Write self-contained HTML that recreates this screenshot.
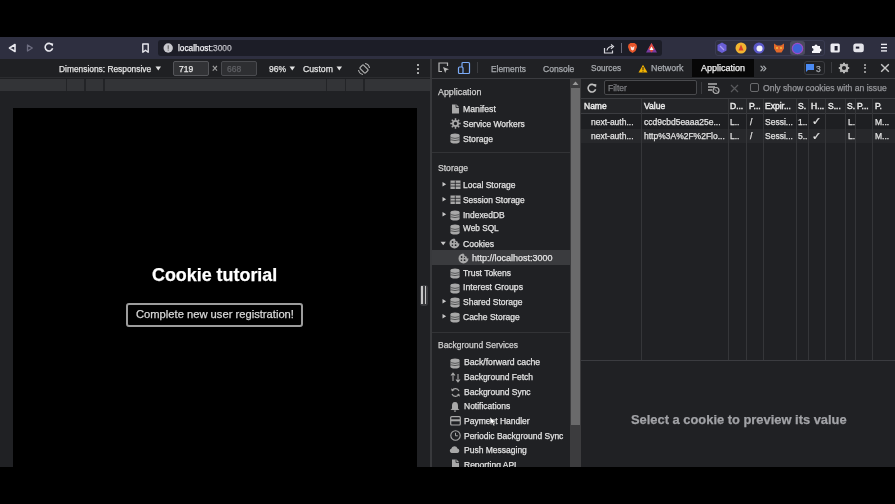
<!DOCTYPE html>
<html><head><meta charset="utf-8"><style>
html,body{margin:0;padding:0;}
body{width:895px;height:504px;overflow:hidden;position:relative;background:#000;font-family:"Liberation Sans", sans-serif;}
</style></head><body>
<div style="position:absolute;left:0px;top:37px;width:895px;height:21.5px;background:#2e2f40;"></div>
<svg style="position:absolute;left:5.5px;top:41.5px;" width="12" height="12" viewBox="0 0 12 12"><path d="M9 2.5 L3.5 6 L9 9.5 Z" fill="none" stroke="#e8e8ee" stroke-width="1.6" stroke-linejoin="round"/></svg>
<svg style="position:absolute;left:24px;top:41.5px;" width="12" height="12" viewBox="0 0 12 12"><path d="M3.5 3 L8.3 6 L3.5 9 Z" fill="none" stroke="#6d6d80" stroke-width="1.3" stroke-linejoin="round"/></svg>
<svg style="position:absolute;left:43px;top:41px;" width="12" height="12" viewBox="0 0 12 12"><path d="M9.2 4.2 A3.8 3.8 0 1 0 9.6 7.2" fill="none" stroke="#e8e8ee" stroke-width="1.6"/><path d="M7.2 2.2 L10.2 2.4 L9.8 5.4 Z" fill="#e8e8ee"/></svg>
<svg style="position:absolute;left:140.5px;top:41.5px;" width="9" height="12" viewBox="0 0 9 12"><path d="M1.8 2 H7.2 V10.2 L4.5 8.2 L1.8 10.2 Z" fill="none" stroke="#e8e8ee" stroke-width="1.4" stroke-linejoin="round"/></svg>
<div style="position:absolute;left:158px;top:40px;width:504px;height:15.5px;background:#1c1d27;border-radius:3px;"></div>
<svg style="position:absolute;left:163px;top:43px;" width="11" height="11" viewBox="0 0 11 11"><circle cx="5.2" cy="5" r="4.7" fill="#c8c8ce"/><rect x="4.7" y="2.3" width="1" height="3.6" fill="#555"/><rect x="4.7" y="6.6" width="1" height="1" fill="#555"/></svg>
<div style="position:absolute;left:178px;top:44.17px;font-size:8.3px;line-height:8.3px;color:#f0f0f4;font-weight:normal;white-space:nowrap;will-change:transform;-webkit-text-stroke:0.25px #f0f0f4;">localhost<span style="color:#7a7a84">:3000</span></div>
<svg style="position:absolute;left:603px;top:42.5px;" width="12" height="11" viewBox="0 0 12 11"><path d="M1.5 5 V10 H9.5 V7.5" fill="none" stroke="#d8d8de" stroke-width="1.2"/><path d="M4 7.5 C4.5 4.5 6.5 3.5 9 3.5" fill="none" stroke="#d8d8de" stroke-width="1.2"/><path d="M8 1.5 L10.5 3.6 L8 5.7" fill="none" stroke="#d8d8de" stroke-width="1.2"/></svg>
<div style="position:absolute;left:620.5px;top:43px;width:1px;height:10px;background:#6a6a78;"></div>
<svg style="position:absolute;left:626.5px;top:41.5px;" width="11" height="12" viewBox="0 0 11 12"><path d="M1.5 2.5 L3.5 1 H7.5 L9.5 2.5 L10 5 L8.5 9 L5.5 11 L2.5 9 L1 5 Z" fill="#e8562a"/><path d="M3.5 4 L5.5 5.5 L7.5 4 L7 7.5 L5.5 8.5 L4 7.5Z" fill="#fff" opacity="0.85"/></svg>
<svg style="position:absolute;left:645px;top:42px;" width="13" height="11" viewBox="0 0 13 11"><path d="M6.5 1 L12 10.5 H1 Z" fill="#7a3aa0"/><path d="M6.5 1 L9.5 6.5 L6.5 10.5 L3.5 6.5Z" fill="#e04a3a"/><path d="M6.5 4.5 L8.5 8 H4.5Z" fill="#fff"/></svg>
<div style="position:absolute;left:714.7px;top:39.7px;width:110.3px;height:16.2px;background:transparent;border:1px solid #3a3c52;border-radius:3px;box-sizing:border-box;"></div>
<div style="position:absolute;left:790px;top:40.5px;width:14.5px;height:14.5px;background:#4b4b5e;border-radius:3px;"></div>
<svg style="position:absolute;left:716px;top:41px;" width="12" height="14" viewBox="0 0 12 14"><path d="M6 1.5 L10.5 4 V9.5 L6 12 L1.5 9.5 V4 Z" fill="#6a5fd6"/><path d="M4 5 L8 9" stroke="#a89cf0" stroke-width="1.3"/></svg>
<svg style="position:absolute;left:735px;top:42px;" width="12" height="12" viewBox="0 0 12 12"><circle cx="6" cy="6" r="5.5" fill="#f2b531"/><path d="M6 2.5 L8.5 8.5 H3.5Z" fill="#d8402a"/></svg>
<svg style="position:absolute;left:753px;top:42px;" width="12" height="12" viewBox="0 0 12 12"><circle cx="6" cy="6" r="5.5" fill="#5a58c8"/><circle cx="6.5" cy="6.5" r="3" fill="#f0f0f8"/></svg>
<svg style="position:absolute;left:772.5px;top:42px;" width="12" height="12" viewBox="0 0 12 12"><path d="M1 1.5 L4 3.5 H8 L11 1.5 L11 6.5 L8.5 10.5 H3.5 L1 6.5Z" fill="#e2682a"/><circle cx="4" cy="6" r="1" fill="#f4c040"/><circle cx="8" cy="6" r="1" fill="#f4c040"/></svg>
<svg style="position:absolute;left:790.5px;top:41.5px;" width="13" height="13" viewBox="0 0 13 13"><circle cx="6.5" cy="6.5" r="5.2" fill="#3f62d8"/><circle cx="6.5" cy="6.5" r="5.2" fill="none" stroke="#9a4cc8" stroke-width="1.2"/></svg>
<svg style="position:absolute;left:809.5px;top:42px;" width="12" height="12" viewBox="0 0 12 12"><path d="M2 4 H4.5 A1.5 1.5 0 0 1 7.5 4 H10 V6.5 A1.5 1.5 0 0 1 10 9.5 V11 H2 V9 A1.5 1.5 0 0 0 2 6Z" fill="#f4f4f8"/></svg>
<svg style="position:absolute;left:829.5px;top:42.8px;" width="10" height="10" viewBox="0 0 10 10"><rect x="0.5" y="0.5" width="9.3" height="9" rx="1.5" fill="#ececf2"/><rect x="4.6" y="3" width="3" height="4.5" fill="#202030"/></svg>
<svg style="position:absolute;left:852.5px;top:43.2px;" width="11" height="10" viewBox="0 0 11 10"><rect x="0.3" y="0.5" width="10.5" height="8.8" rx="2.5" fill="#e4e4ea"/><rect x="2.8" y="3.6" width="3.5" height="2" fill="#202030"/></svg>
<svg style="position:absolute;left:879px;top:41.8px;" width="10" height="11" viewBox="0 0 10 11"><rect x="2" y="1.7" width="6" height="1.4" fill="#ececf2"/><rect x="2" y="5" width="6" height="1.4" fill="#ececf2"/><rect x="2" y="8.2" width="6" height="1.4" fill="#ececf2"/></svg>
<div style="position:absolute;left:0px;top:58.5px;width:895px;height:408.5px;background:#202124;"></div>
<div style="position:absolute;left:0px;top:58.5px;width:431px;height:20.5px;background:#1f2023;"></div>
<div style="position:absolute;left:59px;top:64.89px;font-size:8.4px;line-height:8.4px;color:#e3e3e3;font-weight:normal;white-space:nowrap;will-change:transform;-webkit-text-stroke:0.25px #e3e3e3;">Dimensions: Responsive</div>
<svg style="position:absolute;left:154.5px;top:66px;" width="7" height="5" viewBox="0 0 7 5"><path d="M0.5 0.5 H6 L3.25 4.5Z" fill="#e3e3e3"/></svg>
<div style="position:absolute;left:173px;top:61px;width:36px;height:15px;background:#323336;border:1px solid #55565a;border-radius:2px;box-sizing:border-box;"></div>
<div style="position:absolute;left:178.5px;top:64.80px;font-size:8.5px;line-height:8.5px;color:#e8e8e8;font-weight:normal;white-space:nowrap;will-change:transform;-webkit-text-stroke:0.25px #e8e8e8;">719</div>
<div style="position:absolute;left:211.5px;top:64.03px;font-size:10px;line-height:10px;color:#a8a8a8;font-weight:normal;white-space:nowrap;will-change:transform;-webkit-text-stroke:0.25px #a8a8a8;">×</div>
<div style="position:absolute;left:221px;top:61px;width:36px;height:15px;background:#2e2f32;border:1px solid #4a4b4f;border-radius:2px;box-sizing:border-box;"></div>
<div style="position:absolute;left:227px;top:64.80px;font-size:8.5px;line-height:8.5px;color:#5f6064;font-weight:normal;white-space:nowrap;will-change:transform;-webkit-text-stroke:0.25px #5f6064;">668</div>
<div style="position:absolute;left:269px;top:64.80px;font-size:8.5px;line-height:8.5px;color:#e3e3e3;font-weight:normal;white-space:nowrap;will-change:transform;-webkit-text-stroke:0.25px #e3e3e3;">96%</div>
<svg style="position:absolute;left:288.7px;top:66px;" width="7" height="5" viewBox="0 0 7 5"><path d="M0.5 0.5 H6 L3.25 4.5Z" fill="#e3e3e3"/></svg>
<div style="position:absolute;left:303px;top:64.64px;font-size:8.7px;line-height:8.7px;color:#e3e3e3;font-weight:normal;white-space:nowrap;will-change:transform;-webkit-text-stroke:0.25px #e3e3e3;">Custom</div>
<svg style="position:absolute;left:335.8px;top:66px;" width="7" height="5" viewBox="0 0 7 5"><path d="M0.5 0.5 H6 L3.25 4.5Z" fill="#e3e3e3"/></svg>
<svg style="position:absolute;left:356.5px;top:61.5px;" width="14" height="14" viewBox="0 0 14 14"><g transform="rotate(-45 7 7)"><rect x="4.6" y="3.2" width="4.8" height="7.6" rx="0.8" fill="none" stroke="#b0b0b0" stroke-width="1.2"/></g><path d="M8 1.5 A5.6 5.6 0 0 1 12.5 6 M6 12.5 A5.6 5.6 0 0 1 1.5 8" fill="none" stroke="#b0b0b0" stroke-width="1.1"/></svg>
<div style="position:absolute;left:416.8px;top:63.5px;width:2.2px;height:2.2px;background:#d8d8d8;border-radius:1px;"></div>
<div style="position:absolute;left:416.8px;top:67.5px;width:2.2px;height:2.2px;background:#d8d8d8;border-radius:1px;"></div>
<div style="position:absolute;left:416.8px;top:71.5px;width:2.2px;height:2.2px;background:#d8d8d8;border-radius:1px;"></div>
<div style="position:absolute;left:0px;top:76.8px;width:430.5px;height:0.8px;background:#2b2c2f;"></div>
<div style="position:absolute;left:0px;top:79.4px;width:430.5px;height:12px;background:#333437;"></div>
<div style="position:absolute;left:65.7px;top:79.4px;width:1.6px;height:12px;background:#232427;"></div>
<div style="position:absolute;left:84.2px;top:79.4px;width:1.6px;height:12px;background:#232427;"></div>
<div style="position:absolute;left:103.2px;top:79.4px;width:1.6px;height:12px;background:#232427;"></div>
<div style="position:absolute;left:325.7px;top:79.4px;width:1.6px;height:12px;background:#232427;"></div>
<div style="position:absolute;left:344.7px;top:79.4px;width:1.6px;height:12px;background:#232427;"></div>
<div style="position:absolute;left:363.2px;top:79.4px;width:1.6px;height:12px;background:#232427;"></div>
<div style="position:absolute;left:12.5px;top:107.5px;width:404.5px;height:359.5px;background:#000;"></div>
<div style="position:absolute;left:151.5px;top:266.85px;font-size:17.9px;line-height:17.9px;color:#ffffff;font-weight:bold;white-space:nowrap;will-change:transform;-webkit-text-stroke:0.25px #ffffff;">Cookie tutorial</div>
<div style="position:absolute;left:126px;top:303px;width:177px;height:23.5px;background:#000;border:2px solid #9c9c9c;border-radius:3px;box-sizing:border-box;"></div>
<div style="position:absolute;left:136px;top:309.02px;font-size:11.2px;line-height:11.2px;color:#d8d8d8;font-weight:normal;white-space:nowrap;will-change:transform;-webkit-text-stroke:0.25px #d8d8d8;">Complete new user registration!</div>
<div style="position:absolute;left:420px;top:284.5px;width:7.5px;height:21px;background:#3a3b3e;border-radius:3px;"></div>
<div style="position:absolute;left:421.3px;top:286px;width:1.6px;height:18px;background:#c8c8c8;"></div>
<div style="position:absolute;left:424.8px;top:286px;width:1.6px;height:18px;background:#c8c8c8;"></div>
<div style="position:absolute;left:430.3px;top:58.5px;width:2px;height:408.5px;background:#38393c;"></div>
<div style="position:absolute;left:432px;top:77.5px;width:463px;height:1px;background:#3b3c40;"></div>
<svg style="position:absolute;left:437px;top:61px;" width="13" height="13" viewBox="0 0 13 13"><path d="M5 10.5 H2 V2 H10.5 V5" fill="none" stroke="#b8b8b8" stroke-width="1.2"/><path d="M6 6 L12 8.2 L9.3 9.3 L8.2 12Z" fill="#b8b8b8"/></svg>
<svg style="position:absolute;left:457px;top:60.5px;" width="14" height="14" viewBox="0 0 14 14"><rect x="5" y="1.5" width="7.5" height="11" rx="1" fill="none" stroke="#7cacf8" stroke-width="1.2"/><rect x="1.5" y="6" width="4.5" height="6.5" rx="1" fill="#202124" stroke="#7cacf8" stroke-width="1.2"/></svg>
<div style="position:absolute;left:477px;top:62px;width:1px;height:11px;background:#3b3c40;"></div>
<div style="position:absolute;left:491px;top:64.89px;font-size:8.4px;line-height:8.4px;color:#a8abaf;font-weight:normal;white-space:nowrap;will-change:transform;-webkit-text-stroke:0.25px #a8abaf;">Elements</div>
<div style="position:absolute;left:542.5px;top:64.76px;font-size:8.55px;line-height:8.55px;color:#a8abaf;font-weight:normal;white-space:nowrap;will-change:transform;-webkit-text-stroke:0.25px #a8abaf;">Console</div>
<div style="position:absolute;left:591px;top:65.06px;font-size:8.2px;line-height:8.2px;color:#a8abaf;font-weight:normal;white-space:nowrap;will-change:transform;-webkit-text-stroke:0.25px #a8abaf;">Sources</div>
<svg style="position:absolute;left:637.5px;top:63.5px;" width="10" height="9" viewBox="0 0 10 9"><path d="M5 0.8 L9.5 8.5 H0.5Z" fill="#f4b400"/><rect x="4.5" y="3" width="1" height="3" fill="#202124"/><rect x="4.5" y="6.7" width="1" height="1" fill="#202124"/></svg>
<div style="position:absolute;left:650.5px;top:64.47px;font-size:8.9px;line-height:8.9px;color:#a8abaf;font-weight:normal;white-space:nowrap;will-change:transform;-webkit-text-stroke:0.25px #a8abaf;">Network</div>
<div style="position:absolute;left:692.3px;top:58.8px;width:61.4px;height:18px;background:#070707;"></div>
<div style="position:absolute;left:700.5px;top:64.39px;font-size:8.99px;line-height:8.99px;color:#f0f0f0;font-weight:normal;white-space:nowrap;will-change:transform;-webkit-text-stroke:0.25px #f0f0f0;">Application</div>
<div style="position:absolute;left:759.5px;top:62.34px;font-size:12px;line-height:12px;color:#a8abaf;font-weight:normal;white-space:nowrap;will-change:transform;-webkit-text-stroke:0.25px #a8abaf;">»</div>
<div style="position:absolute;left:803.5px;top:61px;width:21.5px;height:14px;background:transparent;border:1px solid #3b3c40;border-radius:3px;box-sizing:border-box;"></div>
<svg style="position:absolute;left:805px;top:63px;" width="10" height="10" viewBox="0 0 10 10"><path d="M1 1 H9 V7 H3 L1 9Z" fill="#4a8af4"/></svg>
<div style="position:absolute;left:816px;top:64.80px;font-size:8.5px;line-height:8.5px;color:#a8abaf;font-weight:normal;white-space:nowrap;will-change:transform;-webkit-text-stroke:0.25px #a8abaf;">3</div>
<div style="position:absolute;left:831px;top:62px;width:1px;height:11px;background:#3b3c40;"></div>
<svg style="position:absolute;left:838px;top:61.5px;" width="12" height="12" viewBox="0 0 12 12"><circle cx="6" cy="6" r="3.2" fill="none" stroke="#b8b8b8" stroke-width="2.2"/><path d="M6 0.8 V3 M6 9 V11.2 M0.8 6 H3 M9 6 H11.2 M2.3 2.3 L3.9 3.9 M8.1 8.1 L9.7 9.7 M2.3 9.7 L3.9 8.1 M8.1 3.9 L9.7 2.3" stroke="#b8b8b8" stroke-width="2"/></svg>
<div style="position:absolute;left:864px;top:63.5px;width:2px;height:2px;background:#b8b8b8;border-radius:1px;"></div>
<div style="position:absolute;left:864px;top:67px;width:2px;height:2px;background:#b8b8b8;border-radius:1px;"></div>
<div style="position:absolute;left:864px;top:70.5px;width:2px;height:2px;background:#b8b8b8;border-radius:1px;"></div>
<svg style="position:absolute;left:880px;top:63px;" width="10" height="10" viewBox="0 0 10 10"><path d="M1.2 1.2 L8.8 8.8 M8.8 1.2 L1.2 8.8" stroke="#c8c8c8" stroke-width="1.4"/></svg>
<div style="position:absolute;left:438px;top:88.07px;font-size:8.9px;line-height:8.9px;color:#d0d0d0;font-weight:normal;white-space:nowrap;will-change:transform;-webkit-text-stroke:0.25px #d0d0d0;">Application</div>
<svg style="position:absolute;left:450.5px;top:104px;" width="9" height="10" viewBox="0 0 9 10"><path d="M1 0.5 H5.5 L8 3 V9.5 H1Z" fill="#a8a8a8"/><path d="M5 0.5 V3.5 H8" fill="none" stroke="#202124" stroke-width=".8"/></svg>
<svg style="position:absolute;left:449.5px;top:118px;" width="11" height="11" viewBox="0 0 11 11"><circle cx="5.5" cy="5.5" r="2.6" fill="none" stroke="#a8a8a8" stroke-width="1.8"/><path d="M5.5 0.3 V2.5 M5.5 8.5 V10.7 M0.3 5.5 H2.5 M8.5 5.5 H10.7 M1.8 1.8 L3.3 3.3 M7.7 7.7 L9.2 9.2 M1.8 9.2 L3.3 7.7 M7.7 3.3 L9.2 1.8" stroke="#a8a8a8" stroke-width="1.5"/></svg>
<svg style="position:absolute;left:450px;top:133px;" width="10" height="11" viewBox="0 0 10 11"><ellipse cx="5" cy="2.3" rx="4.5" ry="1.8" fill="#a8a8a8"/><rect x="0.5" y="2.3" width="9" height="6.5" fill="#a8a8a8"/><ellipse cx="5" cy="8.8" rx="4.5" ry="1.8" fill="#a8a8a8"/><path d="M0.8 4.6 Q5 6.2 9.2 4.6 M0.8 6.8 Q5 8.4 9.2 6.8" fill="none" stroke="#202124" stroke-width=".6"/></svg>
<div style="position:absolute;left:463.3px;top:105.24px;font-size:8.7px;line-height:8.7px;color:#e3e3e3;font-weight:normal;white-space:nowrap;will-change:transform;-webkit-text-stroke:0.25px #e3e3e3;">Manifest</div>
<div style="position:absolute;left:463.3px;top:120.05px;font-size:8.45px;line-height:8.45px;color:#e3e3e3;font-weight:normal;white-space:nowrap;will-change:transform;-webkit-text-stroke:0.25px #e3e3e3;">Service Workers</div>
<div style="position:absolute;left:463.3px;top:134.52px;font-size:8.6px;line-height:8.6px;color:#e3e3e3;font-weight:normal;white-space:nowrap;will-change:transform;-webkit-text-stroke:0.25px #e3e3e3;">Storage</div>
<div style="position:absolute;left:432px;top:152px;width:138px;height:1px;background:#323336;"></div>
<div style="position:absolute;left:437.6px;top:163.72px;font-size:8.6px;line-height:8.6px;color:#d0d0d0;font-weight:normal;white-space:nowrap;will-change:transform;-webkit-text-stroke:0.25px #d0d0d0;">Storage</div>
<svg style="position:absolute;left:442px;top:181.4px;" width="5" height="7" viewBox="0 0 5 7"><path d="M0.5 1 L4.2 3.3 L0.5 5.6Z" fill="#c8c8c8"/></svg>
<svg style="position:absolute;left:449.5px;top:180.4px;" width="11" height="10" viewBox="0 0 11 10"><rect x="0.5" y="0.5" width="10" height="8.5" fill="#a8a8a8"/><path d="M0.5 3.3 H10.5 M0.5 6.1 H10.5 M5.3 0.5 V9" stroke="#202124" stroke-width=".8"/></svg>
<div style="position:absolute;left:463.3px;top:181.21px;font-size:8.49px;line-height:8.49px;color:#e3e3e3;font-weight:normal;white-space:nowrap;will-change:transform;-webkit-text-stroke:0.25px #e3e3e3;">Local Storage</div>
<svg style="position:absolute;left:442px;top:196.02px;" width="5" height="7" viewBox="0 0 5 7"><path d="M0.5 1 L4.2 3.3 L0.5 5.6Z" fill="#c8c8c8"/></svg>
<svg style="position:absolute;left:449.5px;top:195.02px;" width="11" height="10" viewBox="0 0 11 10"><rect x="0.5" y="0.5" width="10" height="8.5" fill="#a8a8a8"/><path d="M0.5 3.3 H10.5 M0.5 6.1 H10.5 M5.3 0.5 V9" stroke="#202124" stroke-width=".8"/></svg>
<div style="position:absolute;left:463.3px;top:195.90px;font-size:8.41px;line-height:8.41px;color:#e3e3e3;font-weight:normal;white-space:nowrap;will-change:transform;-webkit-text-stroke:0.25px #e3e3e3;">Session Storage</div>
<svg style="position:absolute;left:442px;top:210.64000000000001px;" width="5" height="7" viewBox="0 0 5 7"><path d="M0.5 1 L4.2 3.3 L0.5 5.6Z" fill="#c8c8c8"/></svg>
<svg style="position:absolute;left:450px;top:209.64000000000001px;" width="10" height="11" viewBox="0 0 10 11"><ellipse cx="5" cy="2.3" rx="4.5" ry="1.8" fill="#a8a8a8"/><rect x="0.5" y="2.3" width="9" height="6.5" fill="#a8a8a8"/><ellipse cx="5" cy="8.8" rx="4.5" ry="1.8" fill="#a8a8a8"/><path d="M0.8 4.6 Q5 6.2 9.2 4.6 M0.8 6.8 Q5 8.4 9.2 6.8" fill="none" stroke="#202124" stroke-width=".6"/></svg>
<div style="position:absolute;left:463.3px;top:210.50px;font-size:8.43px;line-height:8.43px;color:#e3e3e3;font-weight:normal;white-space:nowrap;will-change:transform;-webkit-text-stroke:0.25px #e3e3e3;">IndexedDB</div>
<svg style="position:absolute;left:450px;top:224.26px;" width="10" height="11" viewBox="0 0 10 11"><ellipse cx="5" cy="2.3" rx="4.5" ry="1.8" fill="#a8a8a8"/><rect x="0.5" y="2.3" width="9" height="6.5" fill="#a8a8a8"/><ellipse cx="5" cy="8.8" rx="4.5" ry="1.8" fill="#a8a8a8"/><path d="M0.8 4.6 Q5 6.2 9.2 4.6 M0.8 6.8 Q5 8.4 9.2 6.8" fill="none" stroke="#202124" stroke-width=".6"/></svg>
<div style="position:absolute;left:463.3px;top:225.26px;font-size:8.27px;line-height:8.27px;color:#e3e3e3;font-weight:normal;white-space:nowrap;will-change:transform;-webkit-text-stroke:0.25px #e3e3e3;">Web SQL</div>
<svg style="position:absolute;left:440.2px;top:240.88px;" width="7" height="5" viewBox="0 0 7 5"><path d="M0.6 0.8 H5.8 L3.2 4.2Z" fill="#c8c8c8"/></svg>
<svg style="position:absolute;left:449px;top:237.57999999999998px;" width="11" height="11" viewBox="0 0 11 11"><path d="M5.3 0.5 A5 5 0 1 0 10.5 5.6 A1.8 1.8 0 0 1 8.6 3.4 A1.8 1.8 0 0 1 6.3 1.4 A1.2 1.2 0 0 1 5.3 0.5Z" fill="#a8a8a8"/><circle cx="3.6" cy="4" r=".9" fill="#202124"/><circle cx="6.6" cy="7.2" r=".9" fill="#202124"/><circle cx="3.4" cy="7.3" r=".8" fill="#202124"/><circle cx="6.4" cy="4.3" r=".6" fill="#202124"/></svg>
<div style="position:absolute;left:463.3px;top:239.62px;font-size:8.58px;line-height:8.58px;color:#e3e3e3;font-weight:normal;white-space:nowrap;will-change:transform;-webkit-text-stroke:0.25px #e3e3e3;">Cookies</div>
<div style="position:absolute;left:432px;top:250px;width:138px;height:14.5px;background:#3a3b3e;"></div>
<svg style="position:absolute;left:458px;top:252.8px;" width="11" height="11" viewBox="0 0 11 11"><path d="M5.3 0.5 A5 5 0 1 0 10.5 5.6 A1.8 1.8 0 0 1 8.6 3.4 A1.8 1.8 0 0 1 6.3 1.4 A1.2 1.2 0 0 1 5.3 0.5Z" fill="#a8a8a8"/><circle cx="3.6" cy="4" r=".9" fill="#202124"/><circle cx="6.6" cy="7.2" r=".9" fill="#202124"/><circle cx="3.4" cy="7.3" r=".8" fill="#202124"/><circle cx="6.4" cy="4.3" r=".6" fill="#202124"/></svg>
<div style="position:absolute;left:472px;top:253.88px;font-size:9.0px;line-height:9.0px;color:#e3e3e3;font-weight:normal;white-space:nowrap;will-change:transform;-webkit-text-stroke:0.25px #e3e3e3;">http://localhost:3000</div>
<svg style="position:absolute;left:450px;top:268.12px;" width="10" height="11" viewBox="0 0 10 11"><ellipse cx="5" cy="2.3" rx="4.5" ry="1.8" fill="#a8a8a8"/><rect x="0.5" y="2.3" width="9" height="6.5" fill="#a8a8a8"/><ellipse cx="5" cy="8.8" rx="4.5" ry="1.8" fill="#a8a8a8"/><path d="M0.8 4.6 Q5 6.2 9.2 4.6 M0.8 6.8 Q5 8.4 9.2 6.8" fill="none" stroke="#202124" stroke-width=".6"/></svg>
<div style="position:absolute;left:463.3px;top:268.95px;font-size:8.47px;line-height:8.47px;color:#e3e3e3;font-weight:normal;white-space:nowrap;will-change:transform;-webkit-text-stroke:0.25px #e3e3e3;">Trust Tokens</div>
<svg style="position:absolute;left:450px;top:282.74px;" width="10" height="11" viewBox="0 0 10 11"><ellipse cx="5" cy="2.3" rx="4.5" ry="1.8" fill="#a8a8a8"/><rect x="0.5" y="2.3" width="9" height="6.5" fill="#a8a8a8"/><ellipse cx="5" cy="8.8" rx="4.5" ry="1.8" fill="#a8a8a8"/><path d="M0.8 4.6 Q5 6.2 9.2 4.6 M0.8 6.8 Q5 8.4 9.2 6.8" fill="none" stroke="#202124" stroke-width=".6"/></svg>
<div style="position:absolute;left:463.3px;top:283.37px;font-size:8.71px;line-height:8.71px;color:#e3e3e3;font-weight:normal;white-space:nowrap;will-change:transform;-webkit-text-stroke:0.25px #e3e3e3;">Interest Groups</div>
<svg style="position:absolute;left:442px;top:298.36px;" width="5" height="7" viewBox="0 0 5 7"><path d="M0.5 1 L4.2 3.3 L0.5 5.6Z" fill="#c8c8c8"/></svg>
<svg style="position:absolute;left:450px;top:297.36px;" width="10" height="11" viewBox="0 0 10 11"><ellipse cx="5" cy="2.3" rx="4.5" ry="1.8" fill="#a8a8a8"/><rect x="0.5" y="2.3" width="9" height="6.5" fill="#a8a8a8"/><ellipse cx="5" cy="8.8" rx="4.5" ry="1.8" fill="#a8a8a8"/><path d="M0.8 4.6 Q5 6.2 9.2 4.6 M0.8 6.8 Q5 8.4 9.2 6.8" fill="none" stroke="#202124" stroke-width=".6"/></svg>
<div style="position:absolute;left:463.3px;top:298.16px;font-size:8.5px;line-height:8.5px;color:#e3e3e3;font-weight:normal;white-space:nowrap;will-change:transform;-webkit-text-stroke:0.25px #e3e3e3;">Shared Storage</div>
<svg style="position:absolute;left:442px;top:312.98px;" width="5" height="7" viewBox="0 0 5 7"><path d="M0.5 1 L4.2 3.3 L0.5 5.6Z" fill="#c8c8c8"/></svg>
<svg style="position:absolute;left:450px;top:311.98px;" width="10" height="11" viewBox="0 0 10 11"><ellipse cx="5" cy="2.3" rx="4.5" ry="1.8" fill="#a8a8a8"/><rect x="0.5" y="2.3" width="9" height="6.5" fill="#a8a8a8"/><ellipse cx="5" cy="8.8" rx="4.5" ry="1.8" fill="#a8a8a8"/><path d="M0.8 4.6 Q5 6.2 9.2 4.6 M0.8 6.8 Q5 8.4 9.2 6.8" fill="none" stroke="#202124" stroke-width=".6"/></svg>
<div style="position:absolute;left:463.3px;top:312.78px;font-size:8.5px;line-height:8.5px;color:#e3e3e3;font-weight:normal;white-space:nowrap;will-change:transform;-webkit-text-stroke:0.25px #e3e3e3;">Cache Storage</div>
<div style="position:absolute;left:432px;top:331.5px;width:138px;height:1px;background:#323336;"></div>
<div style="position:absolute;left:438px;top:341.23px;font-size:8.47px;line-height:8.47px;color:#d0d0d0;font-weight:normal;white-space:nowrap;will-change:transform;-webkit-text-stroke:0.25px #d0d0d0;">Background Services</div>
<div style="position:absolute;left:463.5px;top:358.45px;font-size:8.68px;line-height:8.68px;color:#e3e3e3;font-weight:normal;white-space:nowrap;will-change:transform;-webkit-text-stroke:0.25px #e3e3e3;">Back/forward cache</div>
<svg style="position:absolute;left:450px;top:357.8px;" width="10" height="11" viewBox="0 0 10 11"><ellipse cx="5" cy="2.3" rx="4.5" ry="1.8" fill="#a8a8a8"/><rect x="0.5" y="2.3" width="9" height="6.5" fill="#a8a8a8"/><ellipse cx="5" cy="8.8" rx="4.5" ry="1.8" fill="#a8a8a8"/><path d="M0.8 4.6 Q5 6.2 9.2 4.6 M0.8 6.8 Q5 8.4 9.2 6.8" fill="none" stroke="#202124" stroke-width=".6"/></svg>
<div style="position:absolute;left:463.5px;top:373.22px;font-size:8.5px;line-height:8.5px;color:#e3e3e3;font-weight:normal;white-space:nowrap;will-change:transform;-webkit-text-stroke:0.25px #e3e3e3;">Background Fetch</div>
<svg style="position:absolute;left:449.5px;top:371.92px;" width="11" height="11" viewBox="0 0 11 11"><path d="M3 9 V1.5 M1 3.5 L3 1.2 L5 3.5 M8 2 V9.5 M6 7.5 L8 9.8 L10 7.5" fill="none" stroke="#a8a8a8" stroke-width="1.1"/></svg>
<div style="position:absolute;left:463.5px;top:387.84px;font-size:8.5px;line-height:8.5px;color:#e3e3e3;font-weight:normal;white-space:nowrap;will-change:transform;-webkit-text-stroke:0.25px #e3e3e3;">Background Sync</div>
<svg style="position:absolute;left:449.5px;top:386.54px;" width="11" height="11" viewBox="0 0 11 11"><path d="M9 4 A4 4 0 0 0 2 3.5 M2 7 A4 4 0 0 0 9 7.5" fill="none" stroke="#a8a8a8" stroke-width="1.2"/><path d="M1 1.5 L2 4.5 L4.5 3Z M10 9.5 L9 6.5 L6.5 8Z" fill="#a8a8a8"/></svg>
<div style="position:absolute;left:463.5px;top:402.46px;font-size:8.5px;line-height:8.5px;color:#e3e3e3;font-weight:normal;white-space:nowrap;will-change:transform;-webkit-text-stroke:0.25px #e3e3e3;">Notifications</div>
<svg style="position:absolute;left:450px;top:401.16px;" width="10" height="11" viewBox="0 0 10 11"><path d="M5 1 C7.5 1 8 3 8 5 V7.5 L9.5 9 H0.5 L2 7.5 V5 C2 3 2.5 1 5 1Z M3.8 9.5 A1.2 1.2 0 0 0 6.2 9.5Z" fill="#a8a8a8"/></svg>
<div style="position:absolute;left:463.5px;top:417.08px;font-size:8.5px;line-height:8.5px;color:#e3e3e3;font-weight:normal;white-space:nowrap;will-change:transform;-webkit-text-stroke:0.25px #e3e3e3;">Payment Handler</div>
<svg style="position:absolute;left:449.5px;top:416.28000000000003px;" width="11" height="10" viewBox="0 0 11 10"><rect x="0.7" y="0.7" width="9.6" height="8.3" rx="1" fill="none" stroke="#a8a8a8" stroke-width="1.2"/><rect x="0.7" y="3.3" width="9.6" height="2" fill="#a8a8a8"/></svg>
<div style="position:absolute;left:463.5px;top:431.72px;font-size:8.48px;line-height:8.48px;color:#e3e3e3;font-weight:normal;white-space:nowrap;will-change:transform;-webkit-text-stroke:0.25px #e3e3e3;">Periodic Background Sync</div>
<svg style="position:absolute;left:449.5px;top:430.4px;" width="11" height="11" viewBox="0 0 11 11"><circle cx="5.5" cy="5.5" r="4.7" fill="none" stroke="#a8a8a8" stroke-width="1.1"/><path d="M5.5 2.8 V5.8 H7.8" fill="none" stroke="#a8a8a8" stroke-width="1"/></svg>
<div style="position:absolute;left:463.5px;top:446.32px;font-size:8.5px;line-height:8.5px;color:#e3e3e3;font-weight:normal;white-space:nowrap;will-change:transform;-webkit-text-stroke:0.25px #e3e3e3;">Push Messaging</div>
<svg style="position:absolute;left:449px;top:445.02px;" width="11" height="9" viewBox="0 0 11 9"><path d="M2.5 8 A2.2 2.2 0 0 1 2.2 3.8 A3.3 3.3 0 0 1 8.5 3.5 A2.3 2.3 0 0 1 8.5 8Z" fill="#a8a8a8"/></svg>
<div style="position:absolute;left:463.5px;top:460.94px;font-size:8.5px;line-height:8.5px;color:#e3e3e3;font-weight:normal;white-space:nowrap;will-change:transform;-webkit-text-stroke:0.25px #e3e3e3;">Reporting API</div>
<svg style="position:absolute;left:450.5px;top:458.64px;" width="9" height="10" viewBox="0 0 9 10"><path d="M1 0.5 H5.5 L8 3 V9.5 H1Z" fill="#a8a8a8"/><path d="M5 0.5 V3.5 H8" fill="none" stroke="#202124" stroke-width=".8"/></svg>
<svg style="position:absolute;left:489px;top:416px;" width="8" height="11" viewBox="0 0 8 11"><path d="M1 1 V8.5 L3 6.8 L4.5 10 L5.8 9.4 L4.4 6.3 L7 6.2Z" fill="#fff" stroke="#222" stroke-width=".6"/></svg>
<div style="position:absolute;left:570px;top:78.5px;width:11px;height:388.5px;background:#3c3c3e;"></div>
<div style="position:absolute;left:570.5px;top:87.5px;width:9px;height:337px;background:#6a6a6b;"></div>
<svg style="position:absolute;left:571px;top:80px;" width="9" height="6" viewBox="0 0 9 6"><path d="M1.5 5 L4.5 1.5 L7.5 5Z" fill="#9a9a9a"/></svg>
<svg style="position:absolute;left:586px;top:82px;" width="12" height="11" viewBox="0 0 12 11"><path d="M9.2 4.2 A3.8 3.8 0 1 0 9.6 7.2" fill="none" stroke="#c0c0c0" stroke-width="1.6"/><path d="M7.2 2 L10.4 2.2 L10 5.4 Z" fill="#c0c0c0"/></svg>
<div style="position:absolute;left:604px;top:80px;width:93px;height:15px;background:#19191b;border:1px solid #48494c;border-radius:2px;box-sizing:border-box;"></div>
<div style="position:absolute;left:607.5px;top:84.30px;font-size:8.5px;line-height:8.5px;color:#7e7f83;font-weight:normal;white-space:nowrap;will-change:transform;-webkit-text-stroke:0.25px #7e7f83;">Filter</div>
<div style="position:absolute;left:700.5px;top:81.5px;width:1px;height:12px;background:#3b3c40;"></div>
<svg style="position:absolute;left:707px;top:82px;" width="14" height="13" viewBox="0 0 14 13"><path d="M1 2 H10 M1 5 H8 M1 8 H5" stroke="#b0b0b0" stroke-width="1.3"/><circle cx="9" cy="8.5" r="3" fill="none" stroke="#b0b0b0" stroke-width="1.2"/><path d="M7.8 7.3 L10.2 9.7" stroke="#b0b0b0" stroke-width="1"/></svg>
<svg style="position:absolute;left:730px;top:83.5px;" width="9" height="9" viewBox="0 0 9 9"><path d="M1 1 L8 8 M8 1 L1 8" stroke="#58595c" stroke-width="1.2"/></svg>
<div style="position:absolute;left:749.5px;top:83px;width:9px;height:9px;background:transparent;border:1px solid #6a6b6e;border-radius:2px;box-sizing:border-box;"></div>
<div style="position:absolute;left:762.5px;top:84.32px;font-size:8.6px;line-height:8.6px;color:#96979b;font-weight:normal;white-space:nowrap;will-change:transform;-webkit-text-stroke:0.25px #96979b;">Only show cookies with an issue</div>
<div style="position:absolute;left:581px;top:97.5px;width:314px;height:1px;background:#3b3c40;"></div>
<div style="position:absolute;left:581px;top:98.5px;width:314px;height:15px;background:#242528;"></div>
<div style="position:absolute;left:581px;top:113.5px;width:314px;height:15.5px;background:#1e1f22;"></div>
<div style="position:absolute;left:581px;top:129px;width:314px;height:14px;background:#27282b;"></div>
<div style="position:absolute;left:581px;top:113px;width:314px;height:0.8px;background:#3b3c40;"></div>
<div style="position:absolute;left:640.5px;top:98.5px;width:0.8px;height:261px;background:#353639;"></div>
<div style="position:absolute;left:727.5px;top:98.5px;width:0.8px;height:261px;background:#353639;"></div>
<div style="position:absolute;left:746px;top:98.5px;width:0.8px;height:261px;background:#353639;"></div>
<div style="position:absolute;left:763px;top:98.5px;width:0.8px;height:261px;background:#353639;"></div>
<div style="position:absolute;left:795.5px;top:98.5px;width:0.8px;height:261px;background:#353639;"></div>
<div style="position:absolute;left:808px;top:98.5px;width:0.8px;height:261px;background:#353639;"></div>
<div style="position:absolute;left:825px;top:98.5px;width:0.8px;height:261px;background:#353639;"></div>
<div style="position:absolute;left:845px;top:98.5px;width:0.8px;height:261px;background:#353639;"></div>
<div style="position:absolute;left:855px;top:98.5px;width:0.8px;height:261px;background:#353639;"></div>
<div style="position:absolute;left:872px;top:98.5px;width:0.8px;height:261px;background:#353639;"></div>
<div style="position:absolute;left:581px;top:359.5px;width:314px;height:1px;background:#3b3c40;"></div>
<div style="position:absolute;left:584px;top:102.30px;font-size:8.5px;line-height:8.5px;color:#e8e8e8;font-weight:normal;white-space:nowrap;will-change:transform;-webkit-text-stroke:0.25px #e8e8e8;-webkit-text-stroke:0.45px #e8e8e8;">Name</div>
<div style="position:absolute;left:644px;top:102.30px;font-size:8.5px;line-height:8.5px;color:#e8e8e8;font-weight:normal;white-space:nowrap;will-change:transform;-webkit-text-stroke:0.25px #e8e8e8;-webkit-text-stroke:0.45px #e8e8e8;">Value</div>
<div style="position:absolute;left:730px;top:102.30px;font-size:8.5px;line-height:8.5px;color:#e8e8e8;font-weight:normal;white-space:nowrap;will-change:transform;-webkit-text-stroke:0.25px #e8e8e8;-webkit-text-stroke:0.45px #e8e8e8;">D...</div>
<div style="position:absolute;left:748.5px;top:102.30px;font-size:8.5px;line-height:8.5px;color:#e8e8e8;font-weight:normal;white-space:nowrap;will-change:transform;-webkit-text-stroke:0.25px #e8e8e8;-webkit-text-stroke:0.45px #e8e8e8;">P...</div>
<div style="position:absolute;left:765px;top:102.30px;font-size:8.5px;line-height:8.5px;color:#e8e8e8;font-weight:normal;white-space:nowrap;will-change:transform;-webkit-text-stroke:0.25px #e8e8e8;-webkit-text-stroke:0.45px #e8e8e8;">Expir...</div>
<div style="position:absolute;left:798px;top:102.30px;font-size:8.5px;line-height:8.5px;color:#e8e8e8;font-weight:normal;white-space:nowrap;will-change:transform;-webkit-text-stroke:0.25px #e8e8e8;-webkit-text-stroke:0.45px #e8e8e8;">S.</div>
<div style="position:absolute;left:810.5px;top:102.30px;font-size:8.5px;line-height:8.5px;color:#e8e8e8;font-weight:normal;white-space:nowrap;will-change:transform;-webkit-text-stroke:0.25px #e8e8e8;-webkit-text-stroke:0.45px #e8e8e8;">H...</div>
<div style="position:absolute;left:828px;top:102.30px;font-size:8.5px;line-height:8.5px;color:#e8e8e8;font-weight:normal;white-space:nowrap;will-change:transform;-webkit-text-stroke:0.25px #e8e8e8;-webkit-text-stroke:0.45px #e8e8e8;">S...</div>
<div style="position:absolute;left:847px;top:102.30px;font-size:8.5px;line-height:8.5px;color:#e8e8e8;font-weight:normal;white-space:nowrap;will-change:transform;-webkit-text-stroke:0.25px #e8e8e8;-webkit-text-stroke:0.45px #e8e8e8;">S.</div>
<div style="position:absolute;left:856.5px;top:102.30px;font-size:8.5px;line-height:8.5px;color:#e8e8e8;font-weight:normal;white-space:nowrap;will-change:transform;-webkit-text-stroke:0.25px #e8e8e8;-webkit-text-stroke:0.45px #e8e8e8;">P...</div>
<div style="position:absolute;left:874.5px;top:102.30px;font-size:8.5px;line-height:8.5px;color:#e8e8e8;font-weight:normal;white-space:nowrap;will-change:transform;-webkit-text-stroke:0.25px #e8e8e8;-webkit-text-stroke:0.45px #e8e8e8;">P.</div>
<div style="position:absolute;left:591px;top:117.60px;font-size:8.5px;line-height:8.5px;color:#e3e3e3;font-weight:normal;white-space:nowrap;will-change:transform;-webkit-text-stroke:0.25px #e3e3e3;">next-auth...</div>
<div style="position:absolute;left:644px;top:117.60px;font-size:8.5px;line-height:8.5px;color:#e3e3e3;font-weight:normal;white-space:nowrap;will-change:transform;-webkit-text-stroke:0.25px #e3e3e3;">ccd9cbd5eaaa25e...</div>
<div style="position:absolute;left:730px;top:117.60px;font-size:8.5px;line-height:8.5px;color:#e3e3e3;font-weight:normal;white-space:nowrap;will-change:transform;-webkit-text-stroke:0.25px #e3e3e3;">L..</div>
<div style="position:absolute;left:749.5px;top:117.60px;font-size:8.5px;line-height:8.5px;color:#e3e3e3;font-weight:normal;white-space:nowrap;will-change:transform;-webkit-text-stroke:0.25px #e3e3e3;">/</div>
<div style="position:absolute;left:765px;top:117.60px;font-size:8.5px;line-height:8.5px;color:#e3e3e3;font-weight:normal;white-space:nowrap;will-change:transform;-webkit-text-stroke:0.25px #e3e3e3;">Sessi...</div>
<div style="position:absolute;left:798px;top:117.60px;font-size:8.5px;line-height:8.5px;color:#e3e3e3;font-weight:normal;white-space:nowrap;will-change:transform;-webkit-text-stroke:0.25px #e3e3e3;">1..</div>
<div style="position:absolute;left:812.3px;top:116.41px;font-size:10.5px;line-height:10.5px;color:#e3e3e3;font-weight:normal;white-space:nowrap;will-change:transform;-webkit-text-stroke:0.25px #e3e3e3;">✓</div>
<div style="position:absolute;left:847.5px;top:117.60px;font-size:8.5px;line-height:8.5px;color:#e3e3e3;font-weight:normal;white-space:nowrap;will-change:transform;-webkit-text-stroke:0.25px #e3e3e3;">L.</div>
<div style="position:absolute;left:874.5px;top:117.60px;font-size:8.5px;line-height:8.5px;color:#e3e3e3;font-weight:normal;white-space:nowrap;will-change:transform;-webkit-text-stroke:0.25px #e3e3e3;">M...</div>
<div style="position:absolute;left:591px;top:132.20px;font-size:8.5px;line-height:8.5px;color:#e3e3e3;font-weight:normal;white-space:nowrap;will-change:transform;-webkit-text-stroke:0.25px #e3e3e3;">next-auth...</div>
<div style="position:absolute;left:644px;top:132.20px;font-size:8.5px;line-height:8.5px;color:#e3e3e3;font-weight:normal;white-space:nowrap;will-change:transform;-webkit-text-stroke:0.25px #e3e3e3;">http%3A%2F%2Flo...</div>
<div style="position:absolute;left:730px;top:132.20px;font-size:8.5px;line-height:8.5px;color:#e3e3e3;font-weight:normal;white-space:nowrap;will-change:transform;-webkit-text-stroke:0.25px #e3e3e3;">L..</div>
<div style="position:absolute;left:749.5px;top:132.20px;font-size:8.5px;line-height:8.5px;color:#e3e3e3;font-weight:normal;white-space:nowrap;will-change:transform;-webkit-text-stroke:0.25px #e3e3e3;">/</div>
<div style="position:absolute;left:765px;top:132.20px;font-size:8.5px;line-height:8.5px;color:#e3e3e3;font-weight:normal;white-space:nowrap;will-change:transform;-webkit-text-stroke:0.25px #e3e3e3;">Sessi...</div>
<div style="position:absolute;left:798px;top:132.20px;font-size:8.5px;line-height:8.5px;color:#e3e3e3;font-weight:normal;white-space:nowrap;will-change:transform;-webkit-text-stroke:0.25px #e3e3e3;">5..</div>
<div style="position:absolute;left:812.3px;top:131.01px;font-size:10.5px;line-height:10.5px;color:#e3e3e3;font-weight:normal;white-space:nowrap;will-change:transform;-webkit-text-stroke:0.25px #e3e3e3;">✓</div>
<div style="position:absolute;left:847.5px;top:132.20px;font-size:8.5px;line-height:8.5px;color:#e3e3e3;font-weight:normal;white-space:nowrap;will-change:transform;-webkit-text-stroke:0.25px #e3e3e3;">L.</div>
<div style="position:absolute;left:874.5px;top:132.20px;font-size:8.5px;line-height:8.5px;color:#e3e3e3;font-weight:normal;white-space:nowrap;will-change:transform;-webkit-text-stroke:0.25px #e3e3e3;">M...</div>
<div style="position:absolute;left:630.7px;top:414.28px;font-size:12.9px;line-height:12.9px;color:#a2a3a7;font-weight:bold;white-space:nowrap;will-change:transform;-webkit-text-stroke:0.25px #a2a3a7;">Select a cookie to preview its value</div>
<div style="position:absolute;left:0px;top:467px;width:895px;height:37px;background:#000;"></div>
</body></html>
